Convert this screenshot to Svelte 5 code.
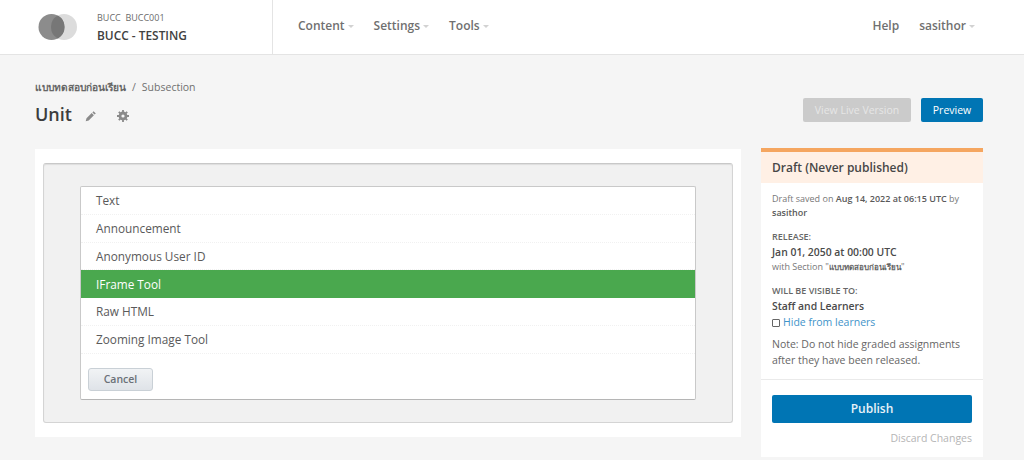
<script>
    const menus = ["Content", "Settings", "Tools"];
    const tools = [
        { name: "Text" },
        { name: "Announcement" },
        { name: "Anonymous User ID" },
        { name: "IFrame Tool", active: true },
        { name: "Raw HTML" },
        { name: "Zooming Image Tool" },
    ];
</script>

<div class="page">
    <header class="topbar">
        <div class="brand">
            <svg class="logo" width="40" height="28" viewBox="0 0 40 28">
                <circle cx="26" cy="14" r="13" fill="#dcdcdc" />
                <circle cx="13.5" cy="14" r="13" fill="#8c8c8c" />
                <path d="M19.75 2.6a13 13 0 0 1 0 22.8a13 13 0 0 1 0-22.8z" fill="#777" />
            </svg>
            <div class="course">
                <div class="org">BUCC&nbsp; BUCC001</div>
                <div class="title">BUCC - TESTING</div>
            </div>
        </div>
        <nav class="menu">
            {#each menus as m}
                <span class="item">{m}<i class="caret"></i></span>
            {/each}
        </nav>
        <div class="user">
            <span class="help">Help</span>
            <span class="item">sasithor<i class="caret"></i></span>
        </div>
    </header>

    <main class="content">
        <div class="crumbs">
            <span class="thai">แบบทดสอบก่อนเรียน</span>
            <span>/</span>
            <span>Subsection</span>
        </div>
        <div class="headline">
            <div class="heading">
                <h1>Unit</h1>
                <svg class="ico pencil" width="12" height="12" viewBox="0 0 12 12">
                    <path d="M8.6 1.2l2.2 2.2-1.2 1.2-2.2-2.2zM6.7 3.1l2.2 2.2-5.2 5.2-3 .8.8-3z" fill="#8a8a8a" />
                </svg>
                <svg class="ico gear" width="12" height="12" viewBox="0 0 12 12">
                    <circle cx="6" cy="6" r="3.3" fill="none" stroke="#8a8a8a" stroke-width="2.2" />
                    <path d="M6 0v12M0 6h12M1.8 1.8l8.4 8.4M10.2 1.8l-8.4 8.4" stroke="#8a8a8a" stroke-width="1.8" />
                    <circle cx="6" cy="6" r="1.6" fill="#f5f5f5" />
                </svg>
            </div>
            <div class="actions">
                <button class="btn disabled">View Live Version</button>
                <button class="btn primary">Preview</button>
            </div>
        </div>

        <div class="columns">
            <section class="editor">
                <div class="well">
                    <div class="picker">
                        <ul>
                            {#each tools as t}
                                <li class:active={t.active}>{t.name}</li>
                            {/each}
                        </ul>
                        <button class="cancel">Cancel</button>
                    </div>
                </div>
            </section>

            <aside class="status">
                <div class="status-head">Draft (Never published)</div>
                <div class="status-body">
                    <p class="saved">Draft saved on <b>Aug 14, 2022 at 06:15 UTC</b> by <b>sasithor</b></p>
                    <h5>RELEASE:</h5>
                    <p class="strong">Jan 01, 2050 at 00:00 UTC</p>
                    <p class="sub">with Section "<b class="thai">แบบทดสอบก่อนเรียน</b>"</p>
                    <h5 class="visible">WILL BE VISIBLE TO:</h5>
                    <p class="strong">Staff and Learners</p>
                    <label class="hide"><i class="box"></i>Hide from learners</label>
                    <p class="note">Note: Do not hide graded assignments after they have been released.</p>
                </div>
                <div class="status-foot">
                    <button class="publish">Publish</button>
                    <div class="discard">Discard Changes</div>
                </div>
            </aside>
        </div>
    </main>
</div>

<style>
    :global(body) {
        margin: 0;
        background: #f5f5f5;
    }

    .page {
        height: 460px;
        overflow: hidden;
        font-family: "Open Sans", "Noto Sans", sans-serif;
        color: #4f4f4f;
    }

    .topbar {
        display: flex;
        align-items: stretch;
        height: 54px;
        background: #fff;
        border-bottom: 1px solid #e4e4e4;
    }

    .brand {
        display: flex;
        align-items: center;
        width: 273px;
        box-sizing: border-box;
        padding-left: 38px;
        border-right: 1px solid #e4e4e4;
    }

    .logo {
        margin-right: 19px;
    }

    .org {
        font-size: 9px;
        line-height: 12px;
        color: #6b6b6b;
        margin-top: 1px;
    }

    .title {
        font-size: 11.9px;
        font-weight: 600;
        line-height: 16px;
        margin-top: 3px;
        color: #414141;
    }

    .menu {
        display: flex;
        align-items: center;
        gap: 20px;
        padding: 0 0 3px 25px;
        flex: 1;
    }

    .item,
    .help {
        font-size: 12px;
        font-weight: 600;
        color: #707070;
        white-space: nowrap;
    }

    .caret {
        display: inline-block;
        margin-left: 3px;
        vertical-align: 2px;
        border-left: 3.5px solid transparent;
        border-right: 3.5px solid transparent;
        border-top: 3.5px solid #d2d2d2;
    }

    .user {
        display: flex;
        align-items: center;
        gap: 20px;
        padding: 0 49px 3px 0;
    }

    .content {
        padding: 0 41px 0 35px;
    }

    .crumbs {
        margin-top: 24px;
        height: 16px;
        font-size: 10.5px;
        line-height: 16px;
        color: #707070;
        display: flex;
        gap: 6px;
    }

    .thai {
        font-family: "Noto Sans", "DejaVu Sans", sans-serif;
        font-weight: 600;
        font-size: 10.2px;
        color: #666;
    }

    .headline {
        display: flex;
        justify-content: space-between;
        align-items: center;
        margin-top: 4px;
        height: 30px;
    }

    .heading {
        display: flex;
        align-items: center;
    }

    h1 {
        margin: 0;
        font-size: 18px;
        font-weight: 600;
        line-height: 26px;
        color: #3d3d3d;
    }

    .ico {
        display: block;
        margin-top: 3px;
    }

    .pencil {
        margin-left: 13px;
    }

    .gear {
        margin-left: 20px;
    }

    .actions {
        display: flex;
        gap: 10px;
        align-self: flex-start;
        margin-top: -1px;
    }

    .btn {
        height: 24px;
        padding: 0;
        border: 0;
        border-radius: 2px;
        font: 400 10.5px "Open Sans", sans-serif;
        color: #fff;
    }

    .btn.disabled {
        width: 108px;
        background: #cbcbcb;
        color: #e6e6e6;
    }

    .btn.primary {
        width: 62px;
        background: #0075b4;
    }

    .columns {
        display: flex;
        gap: 20px;
        align-items: flex-start;
        margin-top: 19px;
    }

    .editor {
        width: 706px;
        height: 288px;
        margin-top: 1px;
        box-sizing: border-box;
        padding: 14px 8px;
        background: #fff;
    }

    .well {
        height: 260px;
        box-sizing: border-box;
        padding: 22px 36px;
        background: #f1f1f1;
        border: 1px solid #d4d4d4;
        border-top-color: #c8c8c8;
        border-radius: 3px;
        box-shadow: inset 0 1px 1px #ddd;
    }

    .picker {
        height: 214px;
        box-sizing: border-box;
        background: #fff;
        border: 1px solid #c9c9c9;
        border-bottom-color: #b5b5b5;
        border-radius: 2px;
    }

    ul {
        list-style: none;
        margin: 0;
        padding: 0;
    }

    li {
        height: 27.8px;
        box-sizing: border-box;
        padding-left: 15px;
        font-size: 11.8px;
        line-height: 27px;
        color: #5a5a5a;
        border-bottom: 1px dotted #f1f1f1;
    }

    li.active {
        background: #4aa84e;
        color: #fff;
        border-bottom: 0;
        line-height: 28px;
    }

    .cancel {
        display: block;
        width: 65px;
        height: 23px;
        margin: 14px 0 0 7px;
        padding: 0;
        border: 1px solid #c9d0d6;
        border-radius: 3px;
        background: linear-gradient(#f1f3f5, #dfe3e8);
        font: 600 10.5px "Open Sans", sans-serif;
        color: #6b7077;
    }

    .status {
        width: 222px;
        height: 309px;
        box-sizing: border-box;
        background: #fff;
        border-top: 4px solid #f5a660;
    }

    .status-head {
        height: 31px;
        padding-left: 11px;
        background: #fff0e5;
        font-size: 12px;
        font-weight: 600;
        line-height: 32px;
        color: #474747;
    }

    .status-body {
        height: 197px;
        box-sizing: border-box;
        padding: 9px 11px 0;
        border-bottom: 1px solid #eaeaea;
    }

    p,
    h5 {
        margin: 0;
    }

    .saved {
        font-size: 9px;
        line-height: 14px;
        color: #777;
    }

    .saved b {
        font-weight: 600;
        color: #5a5a5a;
    }

    h5 {
        margin-top: 10px;
        font-size: 9px;
        font-weight: 600;
        line-height: 14px;
        color: #666;
    }

    .visible {
        margin-top: 11px;
    }

    .strong {
        font-size: 10.4px;
        font-weight: 600;
        line-height: 16px;
        color: #4a4a4a;
    }

    .sub {
        font-size: 9px;
        line-height: 13px;
        color: #777;
    }

    .sub .thai {
        font-size: 8px;
    }

    .hide {
        display: flex;
        align-items: center;
        font-size: 10.5px;
        line-height: 17px;
        color: #3f93c9;
    }

    .box {
        width: 6px;
        height: 6px;
        margin-right: 3px;
        border: 1px solid #666;
        border-radius: 1px;
    }

    .note {
        margin-top: 5px;
        font-size: 10.5px;
        line-height: 16px;
        color: #666;
    }

    .status-foot {
        padding: 15px 11px 0;
    }

    .publish {
        display: block;
        width: 100%;
        height: 28px;
        padding: 0 0 2px;
        border: 0;
        border-radius: 2px;
        background: #0075b4;
        font: 600 12px "Open Sans", sans-serif;
        color: #e8f2f8;
    }

    .discard {
        margin-top: 7px;
        text-align: right;
        font-size: 10.5px;
        line-height: 16px;
        color: #b5b5b5;
    }
</style>
